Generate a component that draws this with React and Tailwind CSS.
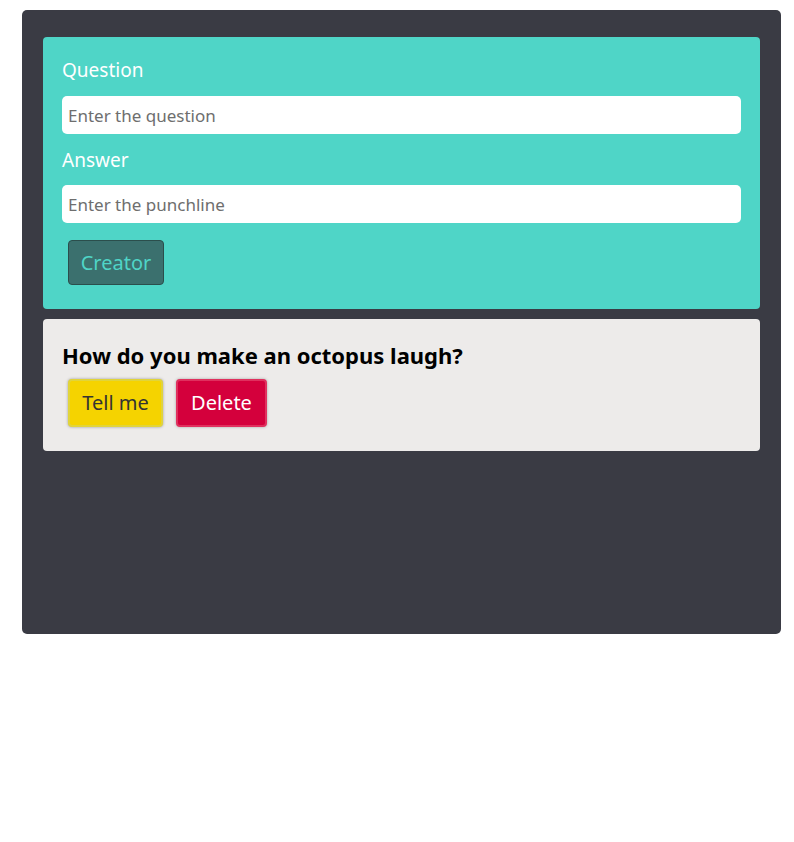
import React from "react";

export default function App() {
  const font = { fontFamily: '"Noto Sans", "Open Sans", sans-serif' };
  return (
    <div className="w-[794px] h-[842px] bg-white pt-[10px] pl-[22px]" style={font}>
      <div className="w-[759px] h-[624px] bg-[#3a3b44] rounded-[5px] px-[21px] pt-[27px]">
        <div className="bg-[#4fd5c7] rounded-[4px] pl-[19px] pr-[19px] pt-[21px] pb-[24px] flex flex-col items-start">
          <label className="text-white text-[19px] leading-[24px]">Question</label>
          <input
            className="mt-[14px] w-full h-[38px] bg-white rounded-[5px] px-[6px] text-[17px] text-[#333] placeholder:text-[#6e6e6e] outline-none"
            placeholder="Enter the question"
          />
          <label className="mt-[14px] text-white text-[19px] leading-[24px]">Answer</label>
          <input
            className="mt-[13px] w-full h-[38px] bg-white rounded-[5px] px-[6px] text-[17px] text-[#333] placeholder:text-[#6e6e6e] outline-none"
            placeholder="Enter the punchline"
          />
          <button className="mt-[17px] ml-[6px] w-[96px] h-[45px] rounded-[4px] bg-[#3b706e] border border-[#2b4e4c] text-[#4fd5c7] text-[20px]">
            Creator
          </button>
        </div>
        <div className="mt-[10px] bg-[#edebea] rounded-[4px] pl-[19px] pt-[22px] pb-[24px]">
          <h2 className="text-[22px] leading-[28px] font-bold text-black">How do you make an octopus laugh?</h2>
          <div className="mt-[10px] ml-[6px] flex gap-[13px]">
            <button className="w-[95px] h-[48px] rounded-[4px] bg-[#f5d300] border-2 border-[#e1d43a] shadow-[0_0_3px_rgba(0,0,0,0.35)] text-[#333] text-[20px]">
              Tell me
            </button>
            <button className="w-[91px] h-[48px] rounded-[4px] bg-[#d4003c] border-2 border-[#e0305e] shadow-[0_0_3px_rgba(0,0,0,0.3)] text-white text-[20px]">
              Delete
            </button>
          </div>
        </div>
      </div>
    </div>
  );
}
